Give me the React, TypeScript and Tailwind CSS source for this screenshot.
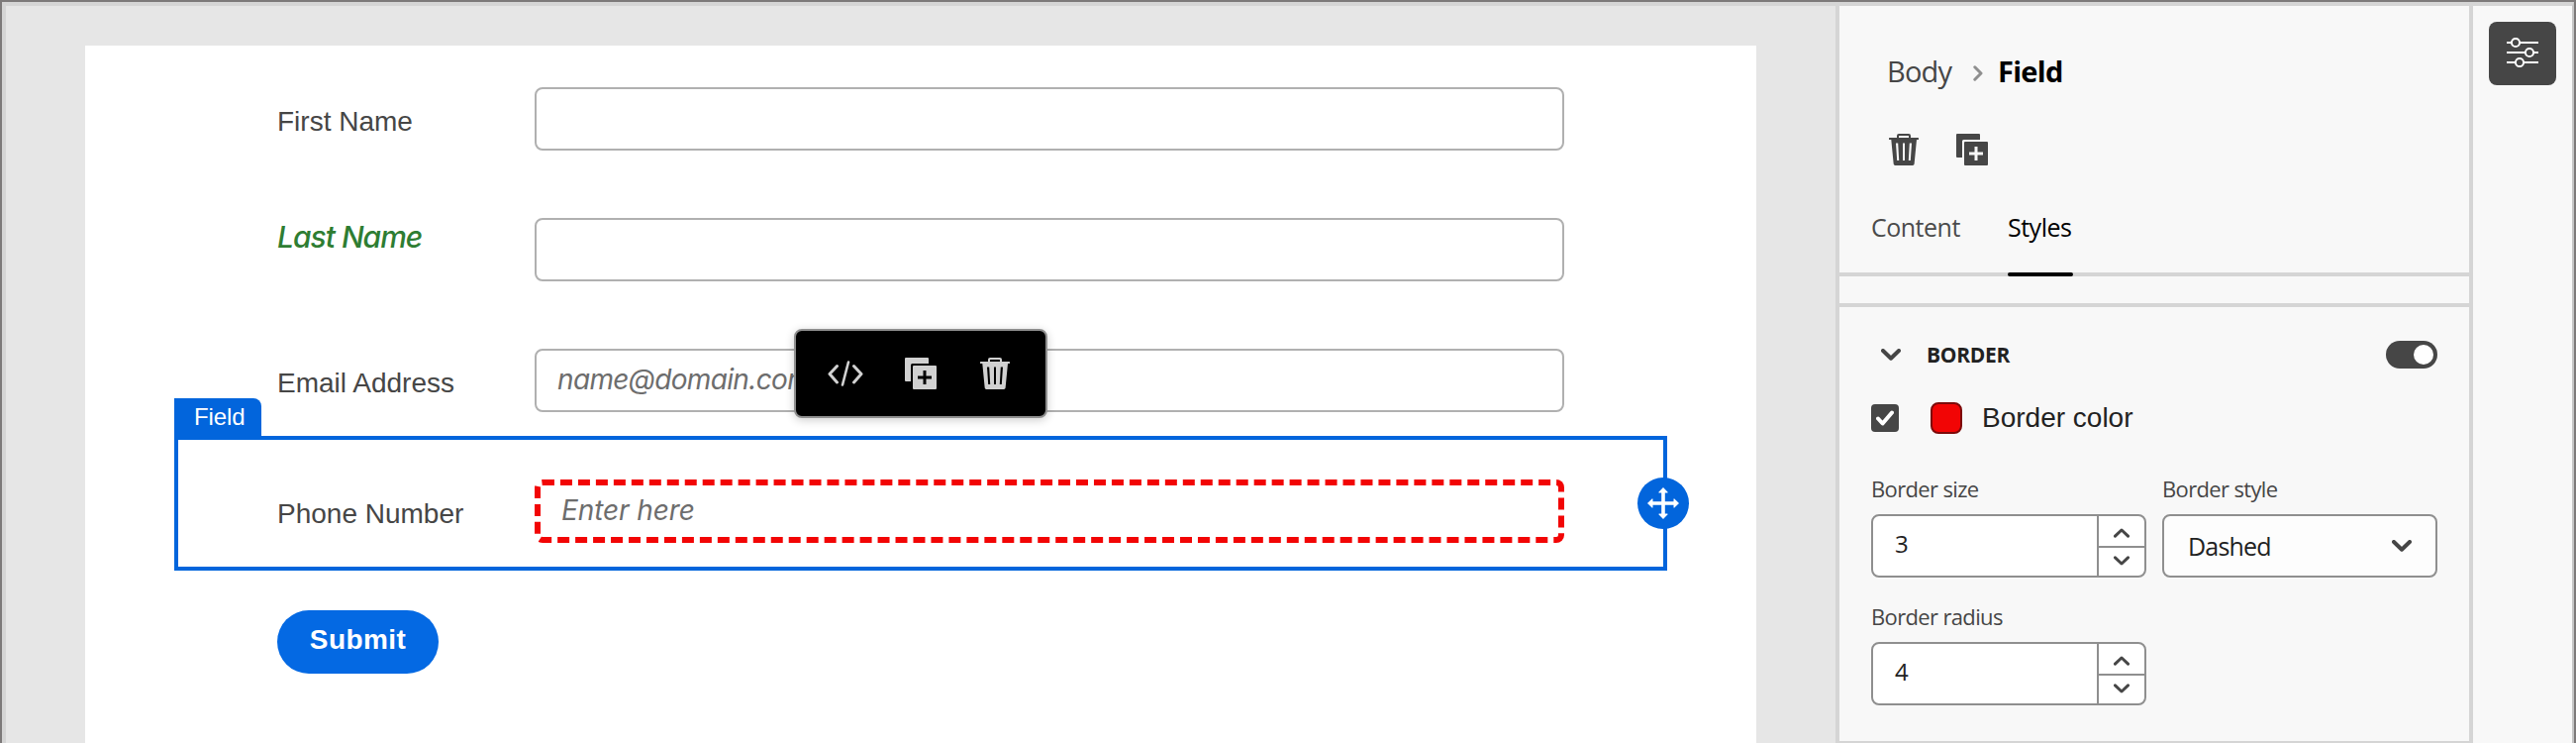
import React from "react";

const adobe = "font-['Open_Sans','Noto_Sans',sans-serif]";
const helv = "font-['Liberation_Sans',Arial,sans-serif]";

function TrashIcon({ className }: { className: string }) {
  return (
    <svg viewBox="0 0 30 32" className={className} fill="currentColor">
      <path
        fillRule="evenodd"
        d="M0 4.6Q0 4 .6 4H8V2Q8 0 10 0H20Q22 0 22 2V4H29.4Q30 4 30 4.6V5.4Q30 6 29.4 6H28L25.6 30.6Q25.4 32 24 32H6.200Q4.900 32 4.700 30.600L2.300 6H.6Q0 6 0 5.400ZM10 4H20V2.500Q20 2 19.500 2H10.500Q10 2 10 2.500ZM7 9.500L8.200 27H10.200L9.200 9.500ZM14 9.500V27H16V9.500ZM20.800 9.500L19.800 27H21.800L23 9.500Z"
      />
    </svg>
  );
}

function DuplicateIcon({ className }: { className: string }) {
  return (
    <svg viewBox="0 0 32 32" className={className} fill="currentColor">
      <path d="M1 0H23Q24 0 24 1V6H7.500Q6 6 6 7.500V24H1Q0 24 0 23V1Q0 0 1 0Z" />
      <path
        fillRule="evenodd"
        d="M9 8H31Q32 8 32 9V31Q32 32 31 32H9Q8 32 8 31V9Q8 8 9 8ZM18.500 13V18.500H13V21.500H18.500V27H21.500V21.500H27V18.500H21.500V13Z"
      />
    </svg>
  );
}

function CodeIcon() {
  return (
    <svg viewBox="0 0 36 26" className="h-[26px] w-9" fill="none" stroke="currentColor" strokeWidth="3" strokeLinecap="round" strokeLinejoin="round">
      <path d="M9.500 5.500L2 13.500L9.500 22" />
      <path d="M26.500 5.500L34 13.500L26.500 22" />
      <path d="M21 1.500L15 24.500" strokeWidth="2.600" />
    </svg>
  );
}

function MoveIcon() {
  return (
    <svg viewBox="0 0 32 32" className="h-8 w-8" fill="#fff">
      <path d="M14.200 4V14.200H4V17.800H14.200V28H17.800V17.800H28V14.200H17.800V4Z" />
      <path d="M16 0L20.600 4.700Q20.800 5.500 20 5.500H12Q11.200 5.500 11.400 4.700ZM16 32L20.600 27.300Q20.800 26.500 20 26.500H12Q11.200 26.500 11.400 27.300ZM0 16L4.700 11.400Q5.500 11.200 5.500 12V20Q5.500 20.800 4.700 20.600ZM32 16L27.300 11.400Q26.500 11.200 26.500 12V20Q26.500 20.800 27.300 20.600Z" />
    </svg>
  );
}

function SlidersIcon() {
  return (
    <svg viewBox="0 0 32 30" className="h-[30px] w-8" fill="none" stroke="#fff" strokeWidth="2">
      <path d="M0 5H5M13 5H32M0 15H19M27 15H32M0 25H9M17 25H32" />
      <circle cx="9" cy="5" r="4.100" />
      <circle cx="23" cy="15" r="4.100" />
      <circle cx="13" cy="25" r="4.100" />
    </svg>
  );
}

function Chevron() {
  return (
    <svg viewBox="0 0 20 12" className="h-3 w-5" fill="none" stroke="#464646" strokeWidth="4" strokeLinecap="round" strokeLinejoin="round">
      <path d="M2 2L10 9.700L18 2" />
    </svg>
  );
}

function StepChevron({ up }: { up?: boolean }) {
  return (
    <svg viewBox="0 0 16 10" className={up ? "h-2.5 w-4 rotate-180" : "h-2.5 w-4"} fill="none" stroke="#464646" strokeWidth="3" strokeLinecap="round" strokeLinejoin="round">
      <path d="M1.500 1.800L8 8L14.500 1.800" />
    </svg>
  );
}

function Row({ label, children }: { label: React.ReactNode; children: React.ReactNode }) {
  return (
    <div className="relative flex h-[132px] items-center pl-[194px]">
      <div className="w-[260px] shrink-0">{label}</div>
      {children}
    </div>
  );
}

const label = "block pt-[6px] text-[28px] leading-8 text-[#464646]";
const box = "flex h-16 w-[1040px] items-center rounded-lg border-2 border-[#b0b0b0] bg-white";
const hint = "font-['Inter',sans-serif] italic leading-8 text-[#6d6d6d] whitespace-nowrap";

function Stepper({ value }: { value: string }) {
  return (
    <div className="flex h-16 w-[278px] overflow-hidden rounded-lg border-2 border-[#8f8f8f] bg-white">
      <div className="flex flex-1 items-center pl-[22px] text-[24px] leading-8 text-[#222]">
        <span className="-translate-y-[2px]">{value}</span>
      </div>
      <div className="flex w-[48px] flex-col border-l-2 border-[#8f8f8f]">
        <div className="flex h-[32px] items-center justify-center border-b-2 border-[#8f8f8f] pt-[3px]">
          <StepChevron up />
        </div>
        <div className="flex flex-1 items-center justify-center pb-[2px]">
          <StepChevron />
        </div>
      </div>
    </div>
  );
}

const caption = "block h-8 -translate-y-[1.5px] text-[22px] font-medium leading-8 tracking-[-0.65px] text-[#464646]";

export default function App() {
  return (
    <div className={`${helv} flex h-[750px] w-[2602px] overflow-hidden border-x-2 border-t-2 border-[#7d7a7a] bg-[#f8f8f8]`}>
      <div className="flex min-w-0 flex-1 border-t-4 border-r-2 border-t-[#d5d5d5] border-r-[#c6c6c6]">
        <main className="w-[1852px] shrink-0 border-l-4 border-[#d5d5d5] bg-[#e6e6e6] pt-10 pl-20">
          <div className="h-[704px] w-[1688px] bg-white pt-2">
            <Row label={<span className={label}>First Name</span>}>
              <div className={box} />
            </Row>
            <Row
              label={
                <span className="block -translate-y-[13px] font-['Inter',sans-serif] text-[30px] leading-8 font-medium tracking-[-1px] text-[#2e7d32] italic">
                  Last Name
                </span>
              }
            >
              <div className={box} />
            </Row>
            <Row label={<span className={label}>Email Address</span>}>
              <div className={`${box} pl-[21px]`}>
                <span className={`${hint} -translate-y-[1px] text-[28px] tracking-[-0.65px]`}>name@domain.com</span>
              </div>
              <div className="absolute top-[14px] left-[716px] z-10 flex h-[90px] w-64 items-center rounded-lg border-2 border-[#8e8e8e] bg-black pl-8 text-[#d1d1d1] shadow-[0_2px_10px_rgba(0,0,0,0.2)]">
                <CodeIcon />
                <DuplicateIcon className="ml-[42px] h-8 w-8" />
                <TrashIcon className="ml-11 h-8 w-[30px]" />
              </div>
            </Row>
            <Row label={<span className={label}>Phone Number</span>}>
              <div className="absolute -top-[10px] left-[90px] h-[136px] w-[1508px] border-4 border-[#0265dc]">
                <div className="absolute -top-[42px] -left-1 h-10 w-[88px] rounded-tr-lg bg-[#0265dc] pl-5 text-[24px] leading-[38px] tracking-[-0.1px] text-white">
                  Field
                </div>
                <div className="absolute top-[38px] -right-[26px] flex h-[52px] w-[52px] items-center justify-center rounded-full bg-[#0265dc]">
                  <MoveIcon />
                </div>
              </div>
              <div className="flex h-16 w-[1040px] items-center rounded-lg border-6 border-dashed border-[#f20505] bg-white pl-[21px]">
                <span className={`${hint} -translate-y-[1px] text-[28px] tracking-[-0.1px]`}>Enter here</span>
              </div>
            </Row>
            <button className="mt-[34px] ml-[194px] flex h-16 w-[163px] items-center justify-center rounded-full bg-[#0469e3] text-[28px] leading-8 font-bold tracking-[0.4px] text-white">
              <span className="-translate-y-[2px]">Submit</span>
            </button>
          </div>
        </main>

        <aside className={`${adobe} flex w-[644px] shrink-0 flex-col border-x-4 border-[#d5d5d5]`}>
          <div className="flex h-[269px] shrink-0 flex-col">
            <div className="mt-[46px] flex h-10 items-center pl-[48px] text-[29px] leading-10">
              <span className="w-[87px] tracking-[-0.8px] text-[#464646]">Body</span>
              <svg viewBox="0 0 10 16" className="mt-1 h-4 w-2.5" fill="none" stroke="#8f8f8f" strokeWidth="3" strokeLinecap="round" strokeLinejoin="round">
                <path d="M1.800 1.800L8 8L1.800 14.200" />
              </svg>
              <span className="ml-[15px] font-bold tracking-[-0.7px] text-black">Field</span>
            </div>
            <div className="mt-[43px] flex pl-[50px] text-[#464646]">
              <TrashIcon className="h-8 w-[30px]" />
              <DuplicateIcon className="ml-[38px] h-8 w-8" />
            </div>
            <div className="mt-[39px] flex flex-1 pl-8 text-[25px] leading-[46px] tracking-[-0.5px]">
              <span className="w-[138px] text-[#4b4b4b]">Content</span>
              <span className="text-black">Styles</span>
            </div>
          </div>
          <div className="h-1 shrink-0 bg-[#d5d5d5]">
            <div className="ml-[170px] h-1 w-[66px] rounded-xs bg-black" />
          </div>
          <div className="h-[27px] shrink-0" />
          <div className="h-1 shrink-0 bg-[#d5d5d5]" />
          <section className="flex h-[438px] shrink-0 flex-col pl-8">
            <div className="mt-8 flex h-8 items-center pl-2.5">
              <Chevron />
              <span className="ml-[26px] w-[464px] text-[21px] leading-8 font-bold tracking-[-0.3px] text-[#222]">BORDER</span>
              <div className="flex h-7 w-[52px] items-center justify-end rounded-full bg-[#464646] pr-1">
                <div className="h-5 w-5 rounded-full bg-white" />
              </div>
            </div>
            <div className="mt-8 flex h-8 items-center">
              <div className="flex h-7 w-7 items-center justify-center rounded-sm bg-[#464646]">
                <svg viewBox="0 0 18 16" className="h-4 w-[18px]" fill="none" stroke="#fff" strokeWidth="4" strokeLinecap="round" strokeLinejoin="round">
                  <path d="M2 8.500L6.600 13.500L16 2.500" />
                </svg>
              </div>
              <div className="ml-8 h-8 w-8 rounded-lg border-2 border-[#7d0a0a] bg-[#f20505]" />
              <span className={`${helv} ml-5 text-[28px] leading-8 text-[#222]`}>Border color</span>
            </div>
            <div className="mt-10 flex gap-4">
              <div>
                <span className={caption}>Border size</span>
                <div className="mt-[9px]">
                  <Stepper value="3" />
                </div>
              </div>
              <div>
                <span className={caption}>Border style</span>
                <div className="mt-[9px] flex h-16 w-[278px] items-center justify-between rounded-lg border-2 border-[#8f8f8f] bg-[#fdfdfd] pr-6 pl-6 text-[25px] leading-8 tracking-[-0.8px] text-[#222]">
                  <span>Dashed</span>
                  <Chevron />
                </div>
              </div>
            </div>
            <div className="mt-6">
              <span className={caption}>Border radius</span>
              <div className="mt-[9px]">
                <Stepper value="4" />
              </div>
            </div>
          </section>
          <div className="h-0.5 shrink-0 bg-[#d5d5d5]" />
        </aside>

        <nav className="flex flex-1 justify-center pt-4">
          <button className="flex h-16 w-[68px] items-center justify-center rounded-lg bg-[#464646] pb-[2px]">
            <SlidersIcon />
          </button>
        </nav>
      </div>
    </div>
  );
}
